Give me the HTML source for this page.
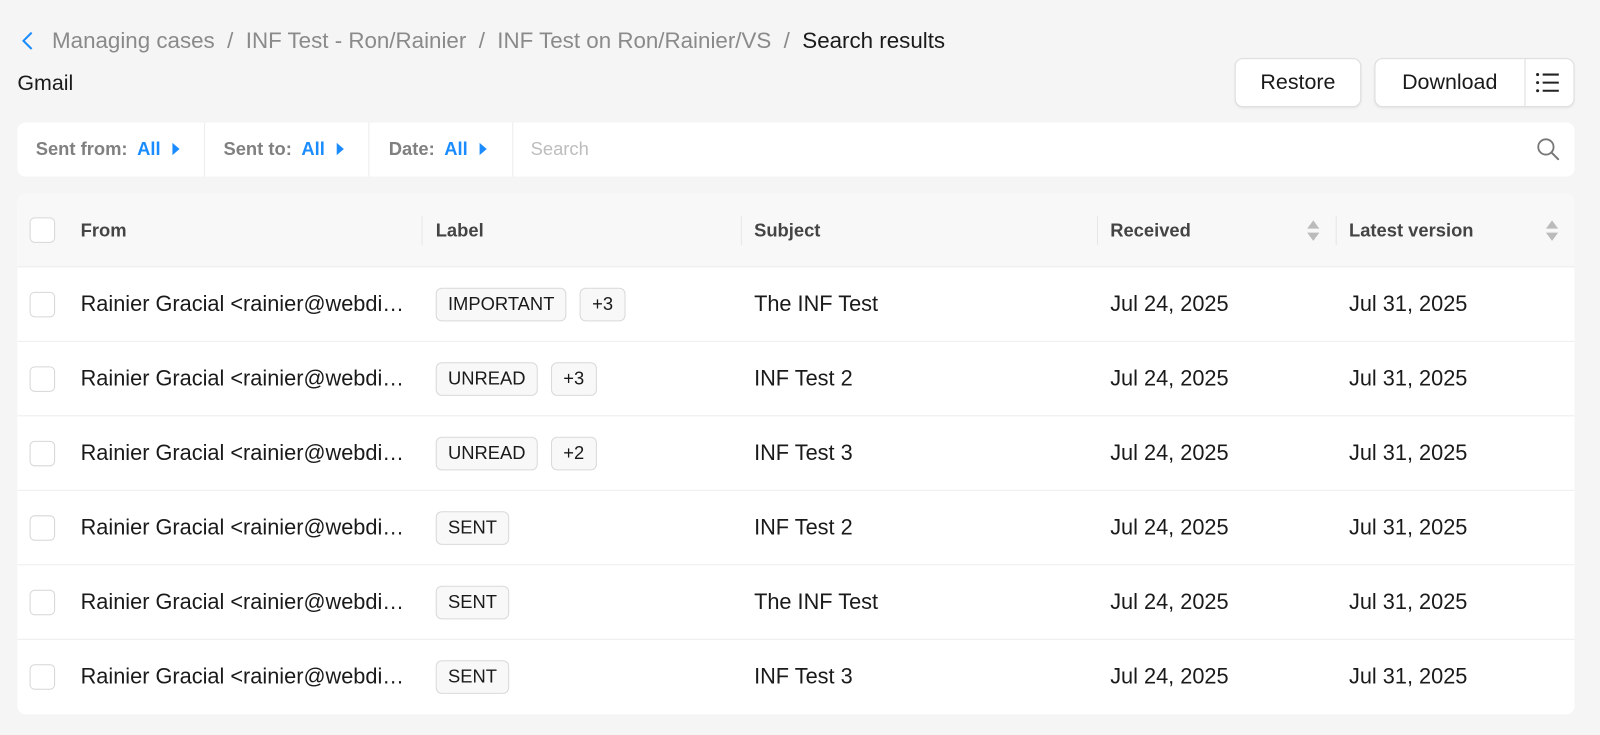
<!DOCTYPE html>
<html><head><style>
*{box-sizing:border-box;margin:0;padding:0}
body{width:1600px;height:734px;background:#f5f5f5;font-family:"Liberation Sans",Helvetica,Arial,sans-serif;overflow:hidden;color:#1a1a1a}
#w{position:absolute;left:0;top:0;width:1568px;height:720px;transform:scale(1.0204);transform-origin:0 0}
.abs{position:absolute}
.bc{left:51px;top:27px;font-size:21.9px;color:#8a8a8a;white-space:nowrap}
.bc b{font-weight:normal;color:#1a1a1a}
.btn{background:#fff;border:1px solid #dcdcdc;border-radius:8px;top:57px;height:48px;font-size:21px;display:flex;align-items:center;justify-content:center;box-shadow:0 1px 2px rgba(0,0,0,.06)}
.filter{left:17px;top:120px;width:1526px;height:53px;background:#fff;border-radius:8px}
.f{top:0;height:53px;line-height:53px;font-size:18px;color:#808080;font-weight:bold}
.f span{color:#1a8cff}
.tri{display:inline-block;width:0;height:0;border-left:7px solid #1a8cff;border-top:6px solid transparent;border-bottom:6px solid transparent;margin-left:12px;vertical-align:0}
.vd{top:0;width:1px;height:53px;background:#ececec}
.table{left:17px;top:190px;width:1526px;height:510px;background:#fff;border-radius:8px;overflow:hidden}
.hdr{left:0;top:0;width:1526px;height:72px;background:#f8f8f8;border-bottom:1px solid #ececec}
.th{top:0;line-height:72px;font-size:18px;font-weight:bold;color:#444}
.hd{top:22px;width:1px;height:28px;background:#e6e6e6}
.cb{width:25px;height:25px;border:1px solid #d6d6d6;border-radius:5px;background:#fff}
.row{left:0;width:1526px;height:73px;border-bottom:1px solid #ededed}
.td{font-size:21.3px;line-height:73px;top:0;white-space:nowrap}
.tags{left:410px;top:20px;display:flex;gap:13px}
.tag{height:33px;line-height:31px;border:1px solid #d9d9d9;border-radius:6px;background:#f8f8f8;font-size:18px;padding:0 11px}
.sort{width:0;height:0;border-left:6px solid transparent;border-right:6px solid transparent}
</style></head><body><div id="w">
<svg class="abs" style="left:19px;top:30px" width="16" height="20" viewBox="0 0 16 20"><path d="M12 2 L4 10 L12 18" fill="none" stroke="#1a8cff" stroke-width="2"/></svg>
<div class="abs bc">Managing cases &nbsp;/&nbsp; INF Test - Ron/Rainier &nbsp;/&nbsp; INF Test on Ron/Rainier/VS &nbsp;/&nbsp; <b>Search results</b></div>
<div class="abs" style="left:17px;top:70px;font-size:21px">Gmail</div>
<div class="abs btn" style="left:1210px;width:124px">Restore</div>
<div class="abs btn" style="left:1347px;width:196px;justify-content:flex-start"><span style="width:147px;text-align:center">Download</span><span style="width:1px;height:46px;background:#dcdcdc"></span>
<svg width="48" height="46" viewBox="0 0 48 46"><g stroke="#222" stroke-width="2"><line x1="18" y1="15" x2="34" y2="15"/><line x1="18" y1="23" x2="34" y2="23"/><line x1="18" y1="31" x2="34" y2="31"/></g><g fill="#222"><circle cx="13" cy="15" r="1.5"/><circle cx="13" cy="23" r="1.5"/><circle cx="13" cy="31" r="1.5"/></g></svg></div>
<div class="abs filter">
<div class="abs f" style="left:18px">Sent from:&nbsp; <span>All</span><i class="tri"></i></div>
<div class="abs vd" style="left:183px"></div>
<div class="abs f" style="left:202px">Sent to:&nbsp; <span>All</span><i class="tri"></i></div>
<div class="abs vd" style="left:344px"></div>
<div class="abs f" style="left:364px">Date:&nbsp; <span>All</span><i class="tri"></i></div>
<div class="abs vd" style="left:485px"></div>
<div class="abs f" style="left:503px;color:#bdbdbd;font-weight:normal">Search</div>
<svg class="abs" style="left:1488px;top:14px" width="26" height="26" viewBox="0 0 26 26"><circle cx="10" cy="10" r="7.5" fill="none" stroke="#777" stroke-width="1.8"/><line x1="15.5" y1="15.5" x2="22" y2="22" stroke="#777" stroke-width="2" stroke-linecap="round"/></svg>
</div>
<div class="abs table">
<div class="abs hdr">
<div class="abs cb" style="left:12px;top:23px"></div>
<div class="abs th" style="left:62px">From</div>
<div class="abs hd" style="left:396px"></div>
<div class="abs th" style="left:410px">Label</div>
<div class="abs hd" style="left:709px"></div>
<div class="abs th" style="left:722px">Subject</div>
<div class="abs hd" style="left:1058px"></div>
<div class="abs th" style="left:1071px">Received</div>
<div class="abs sort" style="left:1264px;top:26px;border-bottom:8px solid #bbb"></div>
<div class="abs sort" style="left:1264px;top:38px;border-top:8px solid #bbb"></div>
<div class="abs hd" style="left:1292px"></div>
<div class="abs th" style="left:1305px">Latest version</div>
<div class="abs sort" style="left:1498px;top:26px;border-bottom:8px solid #bbb"></div>
<div class="abs sort" style="left:1498px;top:38px;border-top:8px solid #bbb"></div>
</div>
<div class="abs row" style="top:72px"><div class="abs cb" style="left:12px;top:24px"></div><div class="abs td" style="left:62px">Rainier Gracial &lt;rainier@webdi…</div><div class="abs tags"><div class="tag">IMPORTANT</div><div class="tag">+3</div></div><div class="abs td" style="left:722px">The INF Test</div><div class="abs td" style="left:1071px">Jul 24, 2025</div><div class="abs td" style="left:1305px">Jul 31, 2025</div></div>
<div class="abs row" style="top:145px"><div class="abs cb" style="left:12px;top:24px"></div><div class="abs td" style="left:62px">Rainier Gracial &lt;rainier@webdi…</div><div class="abs tags"><div class="tag">UNREAD</div><div class="tag">+3</div></div><div class="abs td" style="left:722px">INF Test 2</div><div class="abs td" style="left:1071px">Jul 24, 2025</div><div class="abs td" style="left:1305px">Jul 31, 2025</div></div>
<div class="abs row" style="top:218px"><div class="abs cb" style="left:12px;top:24px"></div><div class="abs td" style="left:62px">Rainier Gracial &lt;rainier@webdi…</div><div class="abs tags"><div class="tag">UNREAD</div><div class="tag">+2</div></div><div class="abs td" style="left:722px">INF Test 3</div><div class="abs td" style="left:1071px">Jul 24, 2025</div><div class="abs td" style="left:1305px">Jul 31, 2025</div></div>
<div class="abs row" style="top:291px"><div class="abs cb" style="left:12px;top:24px"></div><div class="abs td" style="left:62px">Rainier Gracial &lt;rainier@webdi…</div><div class="abs tags"><div class="tag">SENT</div></div><div class="abs td" style="left:722px">INF Test 2</div><div class="abs td" style="left:1071px">Jul 24, 2025</div><div class="abs td" style="left:1305px">Jul 31, 2025</div></div>
<div class="abs row" style="top:364px"><div class="abs cb" style="left:12px;top:24px"></div><div class="abs td" style="left:62px">Rainier Gracial &lt;rainier@webdi…</div><div class="abs tags"><div class="tag">SENT</div></div><div class="abs td" style="left:722px">The INF Test</div><div class="abs td" style="left:1071px">Jul 24, 2025</div><div class="abs td" style="left:1305px">Jul 31, 2025</div></div>
<div class="abs row" style="top:437px;border-bottom:none"><div class="abs cb" style="left:12px;top:24px"></div><div class="abs td" style="left:62px">Rainier Gracial &lt;rainier@webdi…</div><div class="abs tags"><div class="tag">SENT</div></div><div class="abs td" style="left:722px">INF Test 3</div><div class="abs td" style="left:1071px">Jul 24, 2025</div><div class="abs td" style="left:1305px">Jul 31, 2025</div></div>
</div>
</div></body></html>
